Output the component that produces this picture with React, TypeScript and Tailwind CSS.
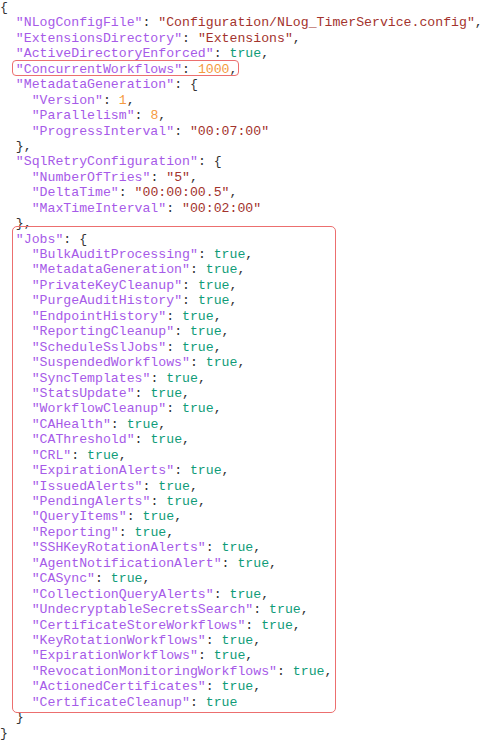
type Val = { t: 'str' | 'num' | 'bool' | 'open'; v: string }

type Line = { indent: number; key?: string; val?: Val; tail?: string; raw?: string }

const jobs = [
  'BulkAuditProcessing',
  'MetadataGeneration',
  'PrivateKeyCleanup',
  'PurgeAuditHistory',
  'EndpointHistory',
  'ReportingCleanup',
  'ScheduleSslJobs',
  'SuspendedWorkflows',
  'SyncTemplates',
  'StatsUpdate',
  'WorkflowCleanup',
  'CAHealth',
  'CAThreshold',
  'CRL',
  'ExpirationAlerts',
  'IssuedAlerts',
  'PendingAlerts',
  'QueryItems',
  'Reporting',
  'SSHKeyRotationAlerts',
  'AgentNotificationAlert',
  'CASync',
  'CollectionQueryAlerts',
  'UndecryptableSecretsSearch',
  'CertificateStoreWorkflows',
  'KeyRotationWorkflows',
  'ExpirationWorkflows',
  'RevocationMonitoringWorkflows',
  'ActionedCertificates',
  'CertificateCleanup',
]

const lines: Line[] = [
  { indent: 0, raw: '{' },
  { indent: 1, key: 'NLogConfigFile', val: { t: 'str', v: 'Configuration/NLog_TimerService.config' }, tail: ',' },
  { indent: 1, key: 'ExtensionsDirectory', val: { t: 'str', v: 'Extensions' }, tail: ',' },
  { indent: 1, key: 'ActiveDirectoryEnforced', val: { t: 'bool', v: 'true' }, tail: ',' },
  { indent: 1, key: 'ConcurrentWorkflows', val: { t: 'num', v: '1000' }, tail: ',' },
  { indent: 1, key: 'MetadataGeneration', val: { t: 'open', v: '{' } },
  { indent: 2, key: 'Version', val: { t: 'num', v: '1' }, tail: ',' },
  { indent: 2, key: 'Parallelism', val: { t: 'num', v: '8' }, tail: ',' },
  { indent: 2, key: 'ProgressInterval', val: { t: 'str', v: '00:07:00' } },
  { indent: 1, raw: '},' },
  { indent: 1, key: 'SqlRetryConfiguration', val: { t: 'open', v: '{' } },
  { indent: 2, key: 'NumberOfTries', val: { t: 'str', v: '5' }, tail: ',' },
  { indent: 2, key: 'DeltaTime', val: { t: 'str', v: '00:00:00.5' }, tail: ',' },
  { indent: 2, key: 'MaxTimeInterval', val: { t: 'str', v: '00:02:00' } },
  { indent: 1, raw: '},' },
  { indent: 1, key: 'Jobs', val: { t: 'open', v: '{' } },
  ...jobs.map((j, i) => ({
    indent: 2,
    key: j,
    val: { t: 'bool' as const, v: 'true' },
    tail: i < jobs.length - 1 ? ',' : '',
  })),
  { indent: 1, raw: '}' },
  { indent: 0, raw: '}' },
]

const valClass = {
  str: 'text-[#a3332d]',
  num: 'text-[#f59a40]',
  bool: 'text-[#0f9c78]',
  open: 'text-[#333333]',
}

const CodeLine = ({ line }: { line: Line }) => {
  const pad = '  '.repeat(line.indent)
  return (
    <div className="whitespace-pre h-[15.45px]">
      {pad}
      {line.raw && <span>{line.raw}</span>}
      {line.key && <span className="text-[#a65ae8]">"{line.key}"</span>}
      {line.key && <span>: </span>}
      {line.val && (
        <span className={valClass[line.val.t]}>
          {line.val.t === 'str' ? `"${line.val.v}"` : line.val.v}
        </span>
      )}
      {line.tail && <span>{line.tail}</span>}
    </div>
  )
}

export default function App() {
  return (
    <div className="relative w-[486px] h-[741px] bg-white overflow-hidden">
      <div className="font-['Liberation_Mono','Courier_New',monospace] text-[13.2px] leading-[15.45px] text-[#333333]">
        {lines.map((l, i) => (
          <CodeLine key={i} line={l} />
        ))}
      </div>

      {/* highlight boxes */}
      <div className="absolute left-[12px] top-[60px] w-[227px] h-[16px] border-[1.5px] border-[#ec6f6f] rounded-[4px]" />
      <div className="absolute left-[12px] top-[226px] w-[324px] h-[487px] border-[1.5px] border-[#ec6f6f] rounded-[5px]" />
    </div>
  )
}
